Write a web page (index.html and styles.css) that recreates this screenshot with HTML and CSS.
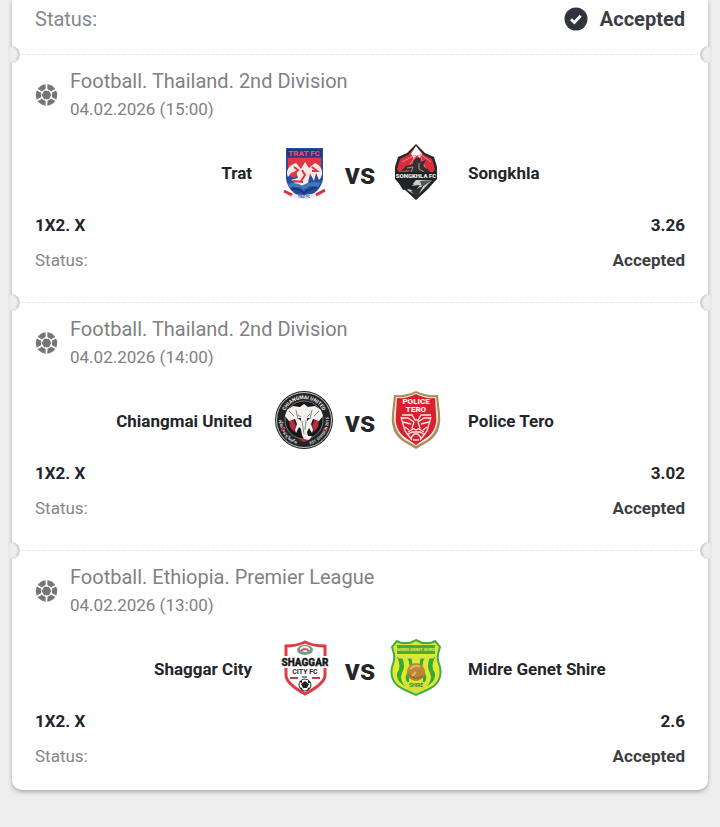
FILE: index.html
```html
<!DOCTYPE html>
<html lang="en">
<head>
<meta charset="utf-8">
<meta name="viewport" content="width=device-width, initial-scale=1">
<title>Bet slip</title>
<link rel="stylesheet" href="styles.css">
</head>
<body>
<svg class="defs" aria-hidden="true">
  <symbol id="ball" viewBox="-11 -11 22 22">
    <circle r="10.7" fill="#757678"/>
    <path d="M0-11V11M-9.5-5.5L9.5 5.5M-9.5 5.5L9.5-5.5" stroke="#fff" stroke-width="1.7"/>
    <path d="M0-6.4L5.5-3.2V3.2L0 6.4L-5.5 3.2V-3.2Z" fill="#fff"/>
    <path d="M-2.4-4.2H2.4L4.8 0L2.4 4.2H-2.4L-4.8 0Z" fill="#757678"/>
  </symbol>
</svg>
<main class="slip">
  <section class="summary">
    <span class="label">Status:</span>
    <strong class="result">
      <svg class="check" viewBox="0 0 24 24" aria-hidden="true"><circle cx="12" cy="12" r="11.5" fill="#30353d"/><path d="M7 12.2L10.3 15.4L16.7 8.8" fill="none" stroke="#fff" stroke-width="2.8"/></svg>
      Accepted
    </strong>
  </section>

  <article class="event">
    <header class="head">
      <svg class="sport" aria-hidden="true"><use href="#ball"/></svg>
      <div><h2>Football. Thailand. 2nd Division</h2><time datetime="2026-02-04T15:00">04.02.2026 (15:00)</time></div>
    </header>
    <div class="match">
      <span class="team home">Trat</span>
      <svg class="crest" viewBox="0 0 60 60" aria-hidden="true">
        <path d="M12 6H49V37Q47 50 30 57Q14 50 12 37Z" fill="#294e9b"/>
        <path d="M13 7H48V15H13Z" fill="#263878"/>
        <path d="M14 16H47V36L42 31L34 36L27 32L20 36L14 33Z" fill="#e23643"/>
        <path d="M14 35C11 29 15 23 22 21L27 27L31 20L35 26L41 21C48 24 51 32 45 38L42 31L40 39L36 31L34 41L25 45L14 43L22 40L17 38L24 36L22 29L17 31Z" fill="#f6e9e7"/>
        <path d="M20 25L24 28L20 32M38 25L43 29L38 29M28 28L31 33L27 39M19 39L29 40" fill="none" stroke="#dc3241" stroke-width="2"/>
        <path d="M14 42Q21 39 29 44Q38 38 47 41L44 45Q36 42 30 48Q22 42 16 46Z" fill="#3d79bc"/>
        <path d="M17 47Q24 46 30 51Q36 46 43 46" fill="none" stroke="#16377b" stroke-width="2"/>
        <path d="M10 49Q19 53 30 53Q42 52 51 48L48 53Q41 57 30 57Q18 57 13 54Z" fill="#eceaf2"/>
        <path d="M10 49L18 53M51 48L42 53" stroke="#db3146" stroke-width="3"/>
        <text class="crest-text heavy" x="30" y="14" font-size="8" fill="#ef4960">TRAT FC</text>
        <text class="crest-text" x="30" y="56" font-size="3" fill="#283b82">TRAT FC</text>
      </svg>
      <b class="versus">vs</b>
      <svg class="crest" viewBox="0 0 60 60" aria-hidden="true">
        <path d="M30 2L39 11L48 15L51 25V37L41 48L30 58L19 48L9 37V25L12 15L21 11Z" fill="#242728"/>
        <path d="M30 4L38 13L46 17L49 27L46 32H14L11 27L14 17L22 13Z" fill="#d82e3c"/>
        <path d="M30 4L36 12L34 16L31 13L28 17L25 12Z" fill="#fff"/>
        <path d="M29 13L16 20M30 13L20 29M32 13L31 28M34 12L45 20M34 13L40 28" stroke="#f37e82"/>
        <path d="M15 29L20 24L27 22L28 18L32 15L35 17L34 20L40 18L37 24L44 29L39 33H21L24 28Z" fill="#362e30"/>
        <path d="M21 26L27 25L25 30M33 21L33 27L38 30" fill="none" stroke="#a79794" stroke-width="1"/>
        <path d="M10 30H50V38H10Z" fill="#202324"/>
        <path d="M18 38H46L31 54L21 48L28 42Z" fill="#c9cbcb"/>
        <path d="M11 38L30 38L25 44L34 43L29 49L22 47L17 48Z" fill="#202324"/>
        <path d="M34 39L46 38L36 45Z" fill="#4f5455"/>
        <path d="M25 49L37 44L31 56Z" fill="#303334"/>
        <text class="crest-text heavy" x="30" y="36" font-size="6" fill="#eee">SONGKHLA FC</text>
      </svg>
      <span class="team">Songkhla</span>
    </div>
    <dl class="facts">
      <div class="market"><dt>1X2. X</dt><dd>3.26</dd></div>
      <div><dt>Status:</dt><dd>Accepted</dd></div>
    </dl>
  </article>

  <article class="event">
    <header class="head">
      <svg class="sport" aria-hidden="true"><use href="#ball"/></svg>
      <div><h2>Football. Thailand. 2nd Division</h2><time datetime="2026-02-04T14:00">04.02.2026 (14:00)</time></div>
    </header>
    <div class="match">
      <span class="team home">Chiangmai United</span>
      <svg class="crest" viewBox="0 0 60 60" aria-hidden="true">
        <circle cx="30" cy="30" r="29" fill="#242426"/>
        <circle cx="30" cy="30" r="27.500" fill="none" stroke="#c7c6c5"/>
        <circle cx="30" cy="30" r="19" fill="#171719" stroke="#777" stroke-width="1"/>
        <path id="arc-top" d="M9 30A21 21 0 0 1 51 30" fill="none"/>
        <path id="arc-left" d="M6 25A25 25 0 0 0 28 55" fill="none"/>
        <path id="arc-right" d="M33 55A25 25 0 0 0 54 24" fill="none"/>
        <text class="crest-text" font-size="5" fill="#eee"><textPath href="#arc-top" startOffset="50%">CHIANGMAI UNITED</textPath></text>
        <text class="crest-text" font-size="4" fill="#ddd"><textPath href="#arc-left" startOffset="50%">เชียงใหม่ ยูไนเต็ด</textPath></text>
        <text class="crest-text" font-size="4" fill="#ddd"><textPath href="#arc-right" startOffset="50%">EST. DIVISION 2015</textPath></text>
        <path d="M15 30L19 29L22 36L20 42L16 37ZM45 30L41 29L38 36L40 42L44 37ZM25 50L30 48L35 50L30 52Z" fill="#b72c35"/>
        <path d="M30 14L34 17L41 16L47 20L49 26L45 31L39 29L37 34L39 40L38 43L35 38L33 42L34 46L38 46L35 50L30 49L28 45L27 39L25 37L22 43L21 40L23 34L21 29L15 31L11 26L13 20L19 16L26 17Z" fill="#f3f2ef"/>
        <path d="M24 25L27 27M36 24L33 27M28 31L30 44M32 30L31 40M22 20L24 29M38 20L36 29M15 21L20 26M45 21L40 26" stroke="#858687" stroke-width="1"/>
        <path d="M24 28H27V31ZM33 28H36L33 31Z" fill="#222"/>
        <path d="M7 41L11 38M49 39L53 42" stroke="#b72c35" stroke-width="2"/>
      </svg>
      <b class="versus">vs</b>
      <svg class="crest" viewBox="0 0 60 60" aria-hidden="true">
        <path d="M30 1Q40 6 52 5L54 24Q56 43 42 52L30 59L18 52Q4 43 6 24L8 5Q20 6 30 1Z" fill="#a98c5d"/>
        <path d="M30 3Q40 8 50 7L52 24Q53 41 41 50L30 56L19 50Q7 41 8 24L10 7Q20 8 30 3Z" fill="#f4e8cf"/>
        <path d="M30 4Q39 9 49 8L50 24Q52 40 40 48L30 55L20 48Q8 40 10 24L11 8Q21 9 30 4Z" fill="#d91f31"/>
        <text class="crest-text heavy" x="30" y="14" font-size="8" fill="#fff8e7">POLICE</text>
        <text class="crest-text heavy" x="30" y="22" font-size="8" fill="#fff8e7">TERO</text>
        <g fill="none" stroke="#ffe9df" stroke-width="1.3">
          <path d="M16 25H26L29 30H32L35 25H45M15 28L22 28L28 32M45 28L38 28L32 32M17 32L25 34M43 32L35 34M15 27L19 41L26 50M45 27L41 41L34 50"/>
          <path d="M28 32L26 38L30 40L34 38L32 32M22 42L27 39M38 42L33 39M21 45L26 42H34L39 45M25 48L28 44H32L35 48M27 50H33M19 37L23 40M41 37L37 40"/>
        </g>
      </svg>
      <span class="team">Police Tero</span>
    </div>
    <dl class="facts">
      <div class="market"><dt>1X2. X</dt><dd>3.02</dd></div>
      <div><dt>Status:</dt><dd>Accepted</dd></div>
    </dl>
  </article>

  <article class="event last">
    <header class="head">
      <svg class="sport" aria-hidden="true"><use href="#ball"/></svg>
      <div><h2>Football. Ethiopia. Premier League</h2><time datetime="2026-02-04T13:00">04.02.2026 (13:00)</time></div>
    </header>
    <div class="match">
      <span class="team home">Shaggar City</span>
      <svg class="crest" viewBox="0 0 60 60" aria-hidden="true">
        <path d="M31 4Q39 8 51 8V38Q50 46 31 56Q13 46 12 38V8Q23 8 31 4Z" fill="#fff" stroke="#df3c45" stroke-width="3"/>
        <ellipse cx="31" cy="12" rx="8" ry="5" fill="#6e9e83"/>
        <ellipse cx="31" cy="11" rx="5" ry="3" fill="#f5efed"/>
        <path d="M27 13Q31 9 35 13" fill="none" stroke="#dd5360" stroke-width="2"/>
        <path d="M6 18H56V30H6Z" fill="#fff"/>
        <text class="crest-text heavy" x="31" y="28" font-size="10" fill="#171717" stroke="#171717" stroke-width=".3">SHAGGAR</text>
        <text class="crest-text" x="31" y="36" font-size="7" fill="#252525">CITY FC</text>
        <path d="M16 40H24M38 40H46" stroke="#b4434c" stroke-width="2"/>
        <path d="M28 39H33" stroke="#222" stroke-width="1"/>
        <circle cx="31" cy="47" r="6" fill="#fff" stroke="#333"/>
        <path d="M31 43L35 46L33 50H29L27 46ZM25 44L28 42V45ZM34 42L37 45L34 45ZM25 49L28 50L29 53ZM37 49L34 50L33 53Z" fill="#222"/>
      </svg>
      <b class="versus">vs</b>
      <svg class="crest" viewBox="0 0 60 60" aria-hidden="true">
        <path d="M30 2L36 5H45L49 3L54 9L52 16Q51 21 54 29Q57 44 43 51L30 57L17 51Q3 44 6 29Q9 21 8 16L6 9L11 3L15 5H24Z" fill="#dfe92f" stroke="#42ad45" stroke-width="2"/>
        <path d="M11 7H49V16H11Z" fill="#4aad39"/>
        <path d="M11 19Q16 29 11 35Q10 42 17 47L20 49Q13 42 16 35Q20 28 16 19ZM21 19Q26 28 21 35Q17 42 25 49Q21 42 25 35Q28 28 25 19ZM49 19Q44 29 49 35Q50 42 43 47L40 49Q47 42 44 35Q40 28 44 19ZM39 19Q34 28 39 35Q43 42 35 49Q39 42 35 35Q32 28 35 19Z" fill="#36a83c"/>
        <path d="M12 19H48" stroke="#d4e548" stroke-width="3"/>
        <path d="M18 44H42L40 50L30 55L20 50Z" fill="#d8df3c"/>
        <circle cx="30" cy="34" r="9" fill="#bb8437"/>
        <path d="M24 31Q29 26 34 29M26 38L30 34" fill="none" stroke="#dfb566" stroke-width="2"/>
        <path d="M22 36Q29 43 37 38" fill="none" stroke="#875c25" stroke-width="1"/>
        <text class="crest-text" x="30" y="13" font-size="4" fill="#e5ed59">MIDRE GENET SHIRE</text>
        <text class="crest-text" x="30" y="49" font-size="5" fill="#278a36">SHIRE</text>
      </svg>
      <span class="team">Midre Genet Shire</span>
    </div>
    <dl class="facts">
      <div class="market"><dt>1X2. X</dt><dd>2.6</dd></div>
      <div><dt>Status:</dt><dd>Accepted</dd></div>
    </dl>
  </article>
</main>
</body>
</html>
```
FILE: styles.css
```css
* { box-sizing: border-box; }
body {
  margin: 0;
  padding: 0 12px 36px;
  background: #eee;
  color: #242529;
  font-family: Roboto, "Liberation Sans", sans-serif;
  font-size: 17px;
}
.defs { position: absolute; width: 0; height: 0; }
.slip {
  background: #fff;
  border-radius: 0 0 10px 10px;
  box-shadow: 0 2px 4px rgba(0, 0, 0, .3);
}
.summary {
  display: flex;
  justify-content: space-between;
  height: 54px;
  padding: 0 23px;
  font-size: 20px;
  line-height: 38px;
}
.label { color: #86878a; }
.result {
  display: flex;
  align-items: center;
  gap: 12px;
  height: 38px;
  font-weight: 700;
  color: #3b3e44;
}
.check { width: 24px; height: 24px; }
.event {
  position: relative;
  padding: 12px 23px 24px;
  border-top: 1px dashed #e6e6e6;
}
.event.last { padding-bottom: 16px; }
.event::before,
.event::after {
  content: "";
  position: absolute;
  top: -9px;
  width: 10px;
  height: 17px;
  background: #eee;
}
.event::before {
  left: -2px;
  border-radius: 0 9px 9px 0;
  box-shadow: inset -2px 0 2px rgba(0, 0, 0, .14);
}
.event::after {
  right: -2px;
  border-radius: 9px 0 0 9px;
  box-shadow: inset 2px 0 2px rgba(0, 0, 0, .14);
}
.head {
  display: flex;
  align-items: center;
  gap: 12px;
  color: #808184;
  line-height: 28px;
}
.sport { width: 23px; height: 22px; }
.head h2 { margin: 0; font-size: 20px; font-weight: 400; }
.head time { display: block; }
.match {
  display: grid;
  grid-template-columns: 1fr 60px 52px 60px 1fr;
  align-items: center;
  margin: 19px 0 6px;
}
.team { padding: 2px 22px 0; font-weight: 700; }
.home { text-align: right; }
.crest { width: 60px; height: 60px; }
.crest-text { font-family: Roboto, sans-serif; font-weight: 700; text-anchor: middle; }
.heavy { font-weight: 900; }
.versus { padding-top: 4px; font-size: 30px; line-height: 32px; text-align: center; }
.facts { margin: 0; line-height: 35px; }
.facts div { display: flex; justify-content: space-between; }
.facts dt { color: #86878a; }
.facts dd { margin: 0; font-weight: 700; color: #3b3e44; }
.facts .market dt,
.facts .market dd { font-weight: 700; color: #242529; }
```
